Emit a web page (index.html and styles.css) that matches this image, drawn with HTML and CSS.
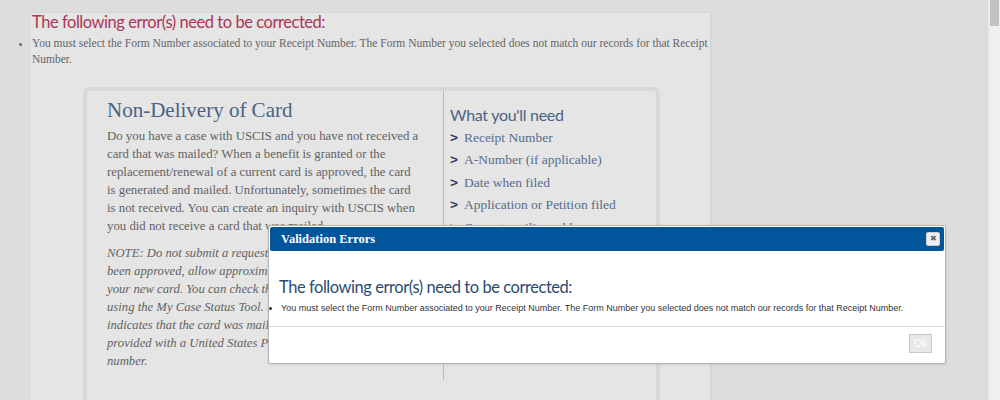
FILE: index.html
```html
<!DOCTYPE html>
<html lang="en">

<head>
  <meta charset="UTF-8">
  <title>Non-Delivery of Card</title>
  <link rel="stylesheet" href="styles.css">
</head>

<body>

  <div class="viewport">

    <!-- Page content -->
    <div class="page">
      <h2 class="error-title">The following error(s) need to be corrected:</h2>
      <ul class="error-list">
        <li>You must select the Form Number associated to your Receipt Number. The Form Number you selected does not match our records for that Receipt Number.</li>
      </ul>

      <div class="card">
        <div class="card-main">
          <h1>Non-Delivery of Card</h1>
          <p>Do you have a case with USCIS and you have not received a<br>
            card that was mailed? When a benefit is granted or the<br>
            replacement/renewal of a current card is approved, the card<br>
            is generated and mailed. Unfortunately, sometimes the card<br>
            is not received. You can create an inquiry with USCIS when<br>
            you did not receive a card that was mailed.</p>
          <p class="note">NOTE: Do not submit a request if your card has not already been approved, allow approximately 30 days for delivery of your new card. You can check the status of your case online using the My Case Status Tool. If your online case status indicates that the card was mailed back to USCIS or you were provided with a United States Postal Service (USPS) tracking number.</p>
        </div>
        <div class="card-side">
          <h3>What you'll need</h3>
          <ul class="needs">
            <li>Receipt Number</li>
            <li>A-Number (if applicable)</li>
            <li>Date when filed</li>
            <li>Application or Petition filed</li>
            <li>Current mailing address</li>
          </ul>
        </div>
      </div>
    </div>

    <!-- Modal overlay -->
    <div class="overlay"></div>

    <div class="dialog">
      <div class="dialog-header">
        <span>Validation Errors</span>
        <button class="dialog-close">&#x2716;</button>
      </div>
      <div class="dialog-body">
        <h2>The following error(s) need to be corrected:</h2>
        <ul>
          <li>You must select the Form Number associated to your Receipt Number. The Form Number you selected does not match our records for that Receipt Number.</li>
        </ul>
      </div>
      <div class="dialog-footer">
        <button class="ok-button" disabled>Ok</button>
      </div>
    </div>

  </div>

  <div class="scrollbar">
    <div class="scroll-thumb"></div>
  </div>

</body>

</html>
```

FILE: styles.css
```css
html,
body {
  height: 100%;
}

body {
  margin: 0;
  display: flex;
  overflow: hidden;
  background: #f7f7f7;
  font-family: 'Liberation Serif', Georgia, serif;
}

.viewport {
  position: relative;
  flex: 1;
  overflow: hidden;
}

.page {
  width: 679px;
  margin: 13px 0 0 31px;
  height: 420px;
  background: #ffffff;
  box-shadow: 1px 0 3px rgba(0, 0, 0, 0.08);
}

.error-title {
  margin: 0;
  padding: 0 0 0 1px;
  font-family: 'Lato', sans-serif;
  font-weight: normal;
  font-size: 16.5px;
  letter-spacing: -0.45px;
  line-height: 18px;
  color: #c13c63;
}

.error-list {
  margin: 4px 0 0;
  padding: 0 0 0 1px;
  font-size: 11.5px;
  line-height: 16px;
  color: #717171;
}

.card {
  display: flex;
  width: 569px;
  margin: 20px 0 0 52px;
  height: 330px;
  border: 4px solid #f1f1f1;
  border-radius: 7px;
}

.card-main {
  width: 322px;
  padding: 6px 14px 0 20px;
  border-right: 1px solid #c8d1dc;
  height: 283px;
}

.card-main h1 {
  margin: 0 0 4px;
  font-weight: normal;
  font-size: 21px;
  line-height: 26px;
  color: #526f94;
}

.card-main p {
  margin: 0 0 9px;
  font-size: 12.8px;
  line-height: 18px;
  color: #6e6e6e;
}

.card-main .note {
  font-size: 12.7px;
  font-style: italic;
}

.card-side {
  padding: 14px 0 0 6px;
}

.card-side h3 {
  margin: 0 0 2px;
  font-family: 'Lato', sans-serif;
  font-weight: normal;
  font-size: 16px;
  letter-spacing: -0.3px;
  line-height: 20px;
  color: #526f94;
}

.needs {
  list-style: none;
  margin: 0;
  padding: 0;
}

.needs li {
  font-size: 13.5px;
  line-height: 22.4px;
  color: #64799a;
}

.needs li::before {
  content: ">";
  margin-right: 6px;
  font-family: 'Liberation Sans', sans-serif;
  font-weight: bold;
  color: #2f476b;
}

.overlay {
  position: absolute;
  inset: 0;
  background: rgba(0, 0, 0, 0.1);
}

.dialog {
  position: absolute;
  left: 268px;
  top: 225px;
  width: 676px;
  height: 137px;
  background: #ffffff;
  border: 1px solid #b5b5b5;
  border-radius: 3px;
  box-shadow: 0 1px 3px rgba(0, 0, 0, 0.1);
}

.dialog-header {
  display: flex;
  align-items: center;
  justify-content: space-between;
  margin: 1px;
  height: 24px;
  padding: 0 4px 0 11px;
  background: #00559b;
  border-radius: 2px;
  color: #ffffff;
  font-weight: bold;
  font-size: 12.5px;
}

.dialog-close {
  width: 14px;
  height: 14px;
  padding: 0;
  border: 1px solid #d0d0d0;
  border-radius: 2px;
  background: #f0f0f0;
  color: #666666;
  font-size: 8px;
  line-height: 12px;
}

.dialog-body {
  padding: 0 10px;
  height: 74px;
  border-bottom: 1px solid #dddddd;
}

.dialog-body h2 {
  margin: 0;
  padding-top: 25px;
  font-family: 'Lato', sans-serif;
  font-weight: normal;
  font-size: 16.5px;
  letter-spacing: -0.45px;
  line-height: 20px;
  color: #2b4c72;
}

.dialog-body ul {
  margin: 5px 0 0;
  padding: 0 0 0 2px;
  font-family: 'Liberation Sans', Arial, sans-serif;
  font-size: 9px;
  line-height: 12px;
  color: #333333;
}

.dialog-footer {
  display: flex;
  justify-content: flex-end;
  padding: 7px 13px 0 0;
}

.ok-button {
  width: 23px;
  height: 19px;
  padding: 0;
  border: 1px solid #c8c8c8;
  background: #e8e8e8;
  color: #ffffff;
  font-family: 'Liberation Sans', Arial, sans-serif;
  font-size: 10px;
}

.scrollbar {
  width: 11px;
  background: #efefef;
  border-left: 1px solid #e4e4e4;
}

.scroll-thumb {
  height: 26px;
  margin: 0 1px;
  background: #c1c1c1;
}
```
